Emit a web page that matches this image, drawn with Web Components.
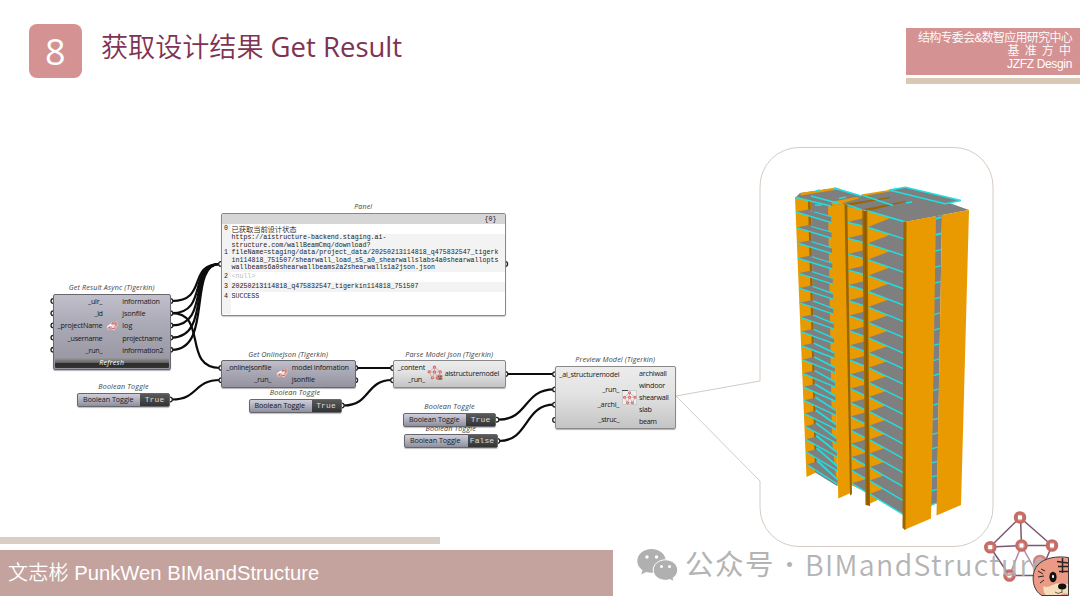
<!DOCTYPE html>
<html lang="zh-CN">
<head>
<meta charset="utf-8">
<title>Get Result</title>
<style>
    body { margin: 0; background: #fff; overflow: hidden; }
    .latin { font-weight: 400; font-size: 27.5px; }
</style>
</head>
<body>
<slide-page>
    <slide-header slot="header" number="8">
        <span>获取设计结果 <fit-text class="latin" w="131.5">Get Result</fit-text></span>
        <fit-text slot="org" w="154">结构专委会&amp;数智应用研究中心</fit-text>
        <fit-text slot="org" w="64.5">基 准 方 中</fit-text>
        <fit-text slot="org" w="65">JZFZ Desgin</fit-text>
    </slide-header>

    <node-canvas>
        <gh-panel x="221" y="212.5" w="284.5" h="103"></gh-panel>
        <gh-node x="53" y="294" w="117.5" h="75.5" name="Get Result Async (Tigerkin)" name-w="86" name-y="287"
            in-w="48.3" gap="20" row="12.2" button="Refresh" icon="small"
            inputs="_ulr_:14.3,_id:7.7,_projectName:44.7,_username:34.7,_run_:16.7"
            outputs="information:37.5,jsonfile:23,log:10,projectname:40,information2:41"></gh-node>
        <gh-toggle x="77" y="393" w="93" value="True" name-y="385.5"></gh-toggle>
        <gh-node x="221" y="360" w="134.5" h="28" name="Get OnlineJson (Tigerkin)" name-w="80" name-y="353.5"
            in-w="49.3" gap="20.5" row="12.2" icon="small"
            inputs="_onlinejsonfile:45,_run_:17" outputs="model infomation:57,jsonfile:23"></gh-node>
        <gh-toggle x="248.5" y="398.5" w="93" value="True" name-y="392.2"></gh-toggle>
        <gh-node x="393" y="360" w="112.5" h="28" name="Parse Model Json (Tigerkin)" name-w="88" name-y="353.5"
            in-w="31" gap="19.7" row="12.2" tone="light" icon="graph"
            inputs="_content:27.3,_run_:17" outputs="aistructuremodel:54.5"></gh-node>
        <gh-toggle x="404" y="434" w="93.5" value="False" name-y="427.7"></gh-toggle>
        <gh-toggle x="403" y="412.5" w="93" value="True" name-y="406"></gh-toggle>
        <gh-node x="555" y="365.5" w="120.5" h="63" name="Preview Model (Tigerkin)" name-w="80" name-y="358.5"
            in-w="63.3" gap="19.7" row="12.1" in-row="15.3" tone="light" icon="box"
            inputs="_ai_structuremodel:60,_run_:17,_archi_:21.7,_struc_:21"
            outputs="archiwall:27.7,windoor:26,shearwall:29.7,slab:12.7,beam:17.7"></gh-node>
        <tower-model></tower-model>
    </node-canvas>

    <slide-footer slot="footer">
        文志彬 <fit-text w="245">PunkWen BIMandStructure</fit-text>
        <wechat-mark slot="mark"></wechat-mark>
    </slide-footer>
</slide-page>

<script>
// y of the canvas area inside the slide
const CANVAS_TOP = 100;

// inline text spread to a given width
class FitText extends HTMLElement {
    constructor() {
        super();
        this.attachShadow({ mode: 'open' });
        this.shadowRoot.innerHTML = `
            <style>
                :host { display: inline-block; white-space: nowrap; }
            </style><slot></slot>`;
    }

    connectedCallback() {
        const w = parseFloat(this.getAttribute('w'));
        if (!w) return;
        const natural = this.getBoundingClientRect().width;
        const n = this.textContent.length;
        const ls = (w - natural) / n;
        this.style.letterSpacing = ls + 'px';
        this.style.width = w + 'px';
    }
}

class SlidePage extends HTMLElement {
    constructor() {
        super();
        this.attachShadow({ mode: 'open' });
        this.shadowRoot.innerHTML = `
            <style>
                :host {
                    display: grid;
                    grid-template-rows: ${CANVAS_TOP}px 430px 78px;
                    width: 1080px;
                    height: 608px;
                    background: #fff;
                    overflow: hidden;
                }
            </style>
            <slot name="header"></slot>
            <slot></slot>
            <slot name="footer"></slot>`;
    }
}

class SlideHeader extends HTMLElement {
    connectedCallback() {
        this.attachShadow({ mode: 'open' });
        this.shadowRoot.innerHTML = `
            <style>
                :host {
                    display: flex;
                    align-items: flex-start;
                    padding-left: 28.5px;
                    font-family: "Open Sans", "Noto Sans CJK SC", sans-serif;
                }
                .num {
                    width: 53.5px;
                    height: 53.5px;
                    margin-top: 24px;
                    border-radius: 8px;
                    background: #d59293;
                    color: #fff;
                    font: 400 36px/55px "Open Sans", sans-serif;
                    text-align: center;
                }
                .title {
                    margin: 27px 0 0 19px;
                    font-size: 27.1px;
                    line-height: 40px;
                    font-weight: 350;
                    color: #7f3352;
                    white-space: nowrap;
                }
                .right { margin-left: auto; width: 174px; margin-top: 28px; }
                .org {
                    display: flex;
                    flex-direction: column;
                    align-items: flex-end;
                    box-sizing: border-box;
                    height: 46.5px;
                    padding: 4px 8px 0 0;
                    background: #d59293;
                    color: #fff;
                    font: 350 12px/13.2px "Liberation Sans", "Noto Sans CJK SC", sans-serif;
                }
                .line { height: 6.5px; margin-top: 3px; background: #d8c8b4; }
            </style>
            <div class="num">${this.getAttribute('number')}</div>
            <div class="title"><slot></slot></div>
            <div class="right">
                <div class="org"><slot name="org"></slot></div>
                <div class="line"></div>
            </div>`;
    }
}

class NodeCanvas extends HTMLElement {
    constructor() {
        super();
        this.attachShadow({ mode: 'open' });
        const wire = (x1, y1, x2, y2) => {
            const d = Math.max((x2 - x1) * 0.55, 18);
            return `<path d="M${x1} ${y1}C${x1 + d} ${y1} ${x2 - d} ${y2} ${x2} ${y2}"/>`;
        };
        const outs = [301, 313.2, 325.4, 337.6, 349.8];
        const ports = [
            ...outs.map(y => [53.3, y]), ...outs.map(y => [170.5, y]),
            [221, 264], [505.3, 264], [170, 399.5], [221.3, 368], [221.3, 380.2],
            [355.3, 368], [355.3, 380.2], [341.8, 405.5], [393, 368], [393, 380.2],
            [505.5, 374], [496.5, 419.7], [497.5, 441],
            [555, 374.2], [555, 389.4], [555, 404.7], [555, 420]
        ];
        this.shadowRoot.innerHTML = `
            <style>
                :host { display: block; position: relative; }
                svg { position: absolute; inset: 0; overflow: visible; }
            </style>
            <svg width="1080" height="430" viewBox="0 ${CANVAS_TOP} 1080 430">
                <path d="M676 396 760 381V187a39 39 0 0 1 39-39.5H954a39 39 0 0 1 39 39.5V507a39 39 0 0 1-39 39.5H799a39 39 0 0 1-39-39.5V481Z"
                    fill="#fff" stroke="#d6cbc3"/>
                <g fill="none" stroke="#0c0c0c" stroke-width="2.2">
                    ${outs.map(y => `<path d="M172 ${y}C${208 + (y - 301) / 9} ${y} 187 264 220 264"/>`).join('')}
                    <path d="M172 313.2C208 313.2 182 368 220 368"/>
                    ${wire(172, 399.5, 220, 380)}
                    ${wire(357, 368, 392, 368)}
                    ${wire(344, 405.5, 392, 380)}
                    ${wire(507, 374, 554, 374)}
                    ${wire(498, 419.7, 554, 389.4)}
                    ${wire(499, 441, 554, 404.7)}
                </g>
                <g fill="#fff" stroke="#222" stroke-width="1.3">
                    ${ports.map(p => `<circle cx="${p[0]}" cy="${p[1]}" r="2.3"/>`).join('')}
                </g>
            </svg>
            <slot></slot>`;
    }
}

const nodeBox = el => {
    const n = a => parseFloat(el.getAttribute(a));
    el.style.left = n('x') + 'px';
    el.style.top = n('y') - CANVAS_TOP + 'px';
    el.style.width = n('w') + 'px';
    if (n('h')) el.style.height = n('h') + 'px';
};

const captionStyle = `
    .name {
        position: absolute;
        left: 0;
        right: 0;
        height: 10px;
        text-align: center;
        font-style: italic;
        color: #444;
        line-height: 10px;
    }`;

// component icons
const graph = `
    <g fill="none" stroke="#c98f98" stroke-width=".6"><path d="M7 2 2 6.5 5 12H10L12.5 6.5ZM2 6.5H12.500M7 2V6.500L5 12M7 6.500 10 12"/></g>
    <g fill="#fff" stroke="#d0706a" stroke-width="1.100"><circle cx="7" cy="2" r="1"/><circle cx="2" cy="6.500" r="1"/><circle cx="7" cy="6.500" r="1"/><circle cx="12.500" cy="6.500" r="1"/><circle cx="5" cy="12" r="1"/><circle cx="10" cy="12" r="1"/></g>`;
const icons = {
    small: `<svg width="14" height="14" viewBox="0 0 13 13"><path d="M1 8 3 5.500 5 5 6 2.500 9 3 11.500 1 12 6.500 9 11 5 9.500 3 11Z" fill="#e0adad"/><path d="M2 7.500 5 5 7 7 10 4M7 7 8 10" stroke="#fff" fill="none"/><path d="M6.500 3.500 9.500 5M10 3V6M6 8.500 9 9M4 7.500V9" stroke="#b2555c" fill="none" stroke-width=".8"/></svg>`,
    graph: `<svg width="16" height="16" viewBox="0 0 15 15">${graph}<path d="M9 14V10.500Q10 8.500 12 9L14.500 9.500V14Z" fill="#d97f74"/><path d="M10.500 11H11.500M13 10V11.500M11 13H13.500" stroke="#40251f" stroke-width=".7"/></svg>`,
    box: `<svg width="15" height="15" viewBox="0 0 15 15"><path d="M.5.500H14.500V14.500H.5Z" fill="#eee" stroke="#bbb" stroke-width=".6"/><path d="M0 .500H6" stroke="#444"/><g transform="translate(.5 .8)">${graph}</g></svg>`
};

class GhNode extends HTMLElement {
    connectedCallback() {
        this.attachShadow({ mode: 'open' });
        nodeBox(this);
        const a = k => this.getAttribute(k);
        const light = a('tone') === 'light';
        const list = s => s.split(',').map(t => {
            const [text, w] = t.split(':');
            return `<div><fit-text w="${w}">${text}</fit-text></div>`;
        }).join('');

        this.shadowRoot.innerHTML = `
            <style>
                :host {
                    display: flex;
                    flex-direction: column;
                    position: absolute;
                    box-sizing: border-box;
                    border: 1px solid ${light ? '#888' : '#66666e'};
                    border-radius: 2px;
                    background: ${light
                        ? 'linear-gradient(#ececec, #e2e2e2 45%, #c4c4c4)'
                        : 'linear-gradient(#c0bfca, #aaa9b6 40%, #94939f)'};
                    box-shadow: 0 1px 1px rgba(0, 0, 0, .3);
                    font: 500 7.2px/8px "Open Sans", sans-serif;
                    color: #16161a;
                }
                ${captionStyle}
                .body { display: flex; flex: 1; align-items: center; padding-bottom: 1.5px; }
                .in, .out { display: flex; flex-direction: column; }
                .in { width: ${a('in-w')}px; align-items: flex-end; }
                .in div { height: ${a('in-row') || a('row')}px; line-height: ${a('in-row') || a('row')}px; }
                .out div { height: ${a('row')}px; line-height: ${a('row')}px; }
                .icon { width: ${a('gap')}px; display: flex; justify-content: center; }
                .btn {
                    height: 10px;
                    margin: 0 1px 1px;
                    border-radius: 1px;
                    background: linear-gradient(#999, #666 45%, #2c2c2c 50%, #333);
                    color: #fff;
                    font: italic 500 7px/9px "Open Sans", sans-serif;
                    text-align: center;
                }
            </style>
            <div class="name" style="top:${a('name-y') - a('y') - 6}px"><fit-text w="${a('name-w')}">${a('name')}</fit-text></div>
            <div class="body">
                <div class="in">${list(a('inputs'))}</div>
                <div class="icon">${icons[a('icon')]}</div>
                <div class="out">${list(a('outputs'))}</div>
            </div>
            ${a('button') ? `<div class="btn"><fit-text w="25">${a('button')}</fit-text></div>` : ''}`;
    }
}

class GhToggle extends HTMLElement {
    connectedCallback() {
        this.attachShadow({ mode: 'open' });
        nodeBox(this);
        const value = this.getAttribute('value');
        const top = this.getAttribute('name-y') - this.getAttribute('y') - 6;
        this.shadowRoot.innerHTML = `
            <style>
                :host {
                    display: flex;
                    position: absolute;
                    box-sizing: border-box;
                    height: 14px;
                    border: 1px solid #66666e;
                    border-radius: 2px;
                    background: linear-gradient(#cfcfdc, #a9a9b8 60%, #8f8f9c);
                    box-shadow: 0 1px 1px rgba(0, 0, 0, .25);
                    font: 500 7.2px/11px "Open Sans", sans-serif;
                    color: #16161a;
                }
                ${captionStyle}
                .label { flex: 1; padding-left: 5px; }
                .value {
                    width: 29px;
                    background: linear-gradient(#5a5a5a, #333);
                    color: #ddd;
                    font: 8px/11px "Liberation Mono", monospace;
                    text-align: center;
                }
            </style>
            <div class="name" style="top:${top}px"><fit-text w="50.5">Boolean Toggle</fit-text></div>
            <div class="label"><fit-text w="50.5">Boolean Toggle</fit-text></div>
            <div class="value"><fit-text w="${value.length * 4.9}">${value}</fit-text></div>`;
    }
}

class GhPanel extends HTMLElement {
    connectedCallback() {
        this.attachShadow({ mode: 'open' });
        nodeBox(this);
        this.shadowRoot.innerHTML = `
            <style>
                :host {
                    display: block;
                    position: absolute;
                    box-sizing: border-box;
                    border: 1px solid #888;
                    border-radius: 2px;
                    background: #fff;
                    box-shadow: 0 1px 1px rgba(0, 0, 0, .2);
                    font: 6.62px/7.4px "Liberation Mono", "Noto Sans CJK SC", monospace;
                    color: #222;
                }
                ${captionStyle}
                .name { font: italic 500 7px/10px "Open Sans", sans-serif; }
                .head { height: 10px; background: #d6d6d6; text-align: right; line-height: 10px; padding-right: 8px; }
                .row { display: flex; align-items: center; height: 10px; background: linear-gradient(90deg, #f3f3f3 8.5px, transparent 8.5px); }
                .row.alt { background: #f3f3f3; }
                .row.url { height: 38px; }
                .row.last { height: 10px; padding-bottom: 12.500px; }
                .idx { width: 9.5px; padding-left: 2px; box-sizing: border-box; flex: none; }
                .null { color: #bbb; }
                .zh { font: 7.4px/9px "Noto Sans CJK SC", sans-serif; font-weight: 350; }
                .url .txt { display: flex; flex-direction: column; align-items: flex-start; padding-top: 1px; }
            </style>
            <div class="name" style="top:-12px"><fit-text w="18">Panel</fit-text></div>
            <div class="head">{0}</div>
            <div class="row"><span class="idx">0</span><fit-text class="zh" w="65">已获取当前设计状态</fit-text></div>
            <div class="row alt url"><span class="idx">1</span><div class="txt">
                <fit-text w="155">https://aistructure-backend.staging.ai-</fit-text>
                <fit-text w="139">structure.com/wallBeamCmq/download?</fit-text>
                <fit-text w="267">fileName=staging/data/project_data/20250213114818_q475832547_tigerk</fit-text>
                <fit-text w="267">in114818_751507/shearwall_load_s5_a0_shearwallslabs4a0shearwallopts</fit-text>
                <fit-text w="203.500">wallbeams6a0shearwallbeams2a2shearwalls1a2json.json</fit-text>
            </div></div>
            <div class="row"><span class="idx">2</span><span class="null">&lt;null&gt;</span></div>
            <div class="row alt"><span class="idx">3</span><fit-text w="187">20250213114818_q475832547_tigerkin114818_751507</fit-text></div>
            <div class="row last"><span class="idx">4</span><span>SUCCESS</span></div>`;
    }
}

// high-rise model: walls orange, slabs gray, beams cyan
class TowerModel extends HTMLElement {
    constructor() {
        super();
        this.attachShadow({ mode: 'open' });
        this.shadowRoot.innerHTML = `
            <style>
                :host { display: block; position: absolute; left: 780px; top: ${170 - CANVAS_TOP}px; }
                svg { display: block; }
            </style>
            <svg width="200" height="370" viewBox="780 170 200 370">${this.draw()}</svg>`;
    }

    draw() {
        const O = '#e89a00', G = '#7f7f7f', C = '#1fe0e0', D = '#9b6500';
        const poly = (pts, fill, extra = '') => `<polygon points="${pts}" fill="${fill}" ${extra}/>`;
        const line = (x1, y1, x2, y2, w = 1.4) =>
            `<path d="M${x1} ${y1}L${x2} ${y2}" stroke="${C}" stroke-width="${w}"/>`;
        const mix = (a, b, t) => a + (b - a) * t;
        let s = '';

        // left bay
        s += poly('795,197 832,204 838,486 817,472 806.500,477', O);
        s += poly('811,200 828,203 832,440 837,486 816,473', G);
        s += poly('808,200 810.500,200 816.500,470 815,473', D);
        for (let i = 0; i < 19; i++) {
            const t = i / 18;
            const yl = 212 + 15.7 * i - 0.093 * i * i;
            const yr = 222.7 + 15.6 * i - 0.06 * i * i;
            const xl = mix(795.8, 806.8, t), xr = mix(831.5, 837.5, t);
            const xm = mix(811, 817, t);
            s += poly(`${xl},${yl} ${xm},${yl - 3} ${xr},${yr - 6} ${xr},${yr}`, G);
            s += line(xm, yl - mix(1, 4, t), xr, yr - mix(6, 4.5, t), mix(1.1, 1.8, t));
            s += line(xl, yl, xr, yr);
        }
        // middle bay
        s += poly('846,204 864,206 866,492 851,485', O);
        for (let i = 0; i < 19; i++) {
            const t = i / 18;
            const yl = 222.3 + 16.1 * i - 0.089 * i * i;
            const yr = 226 + 16.35 * i - 0.088 * i * i;
            const xl = mix(846.7, 851.7, t), xr = mix(863, 865.5, t);
            s += poly(`${xl},${yl} ${xr},${yl - 4} ${xr},${yr}`, G);
            s += line(xl, yl, xr, yr);
        }
        // main bay
        const L = i => 210.7 + 16.6 * i - 0.089 * i * i;
        const R = i => 221.7 + 17.2 * i - 0.093 * i * i;
        s += poly('867,210 905,221 904,515 869,494', O);
        s += poly('869,494 880,499 869,504', O);
        for (let i = 1; i < 20; i++) {
            const t = i / 19, k = mix(0.66, 0.4, t), xl = mix(867.3, 869.5, t);
            s += poly(`${xl},${L(i)} 904,${R(i)} 904,${R(i - 1)} ${mix(xl, 904, k)},${mix(L(i - 1), R(i - 1), k)}`, G);
            s += line(xl, L(i - 1), 904, R(i - 1));
        }
        s += line(869.5, L(19), 904, R(19));
        // gap between the two end walls
        s += poly('935,216 942,215 937,503 931,506', G);
        for (let i = 0; i < 20; i++) {
            const y = 218 + 16.4 * i - 0.071 * i * i, x = mix(935.5, 931, i / 19);
            s += line(x, y + .7, x + 6, y - .9, i < 2 ? 2 : 1.3);
        }
        // roof
        s += poly('796,197 800,193 836,188 861,195.500 892,190.500 905,187.500 944,201 969,210 905,222 867,211 845,206 830,206', G);
        s += poly('800,193 836,187.500 840,189 801,195.500', O);
        s += poly('861,194.500 892,189.500 895,190.500 864,196', O);
        s += poly('831,202 856,197 860,198 833,206', O);
        s += poly('843,204 890,197 890,198 847,206', D);
        s += poly('864,209 905,201 905,202 868,211', D);
        s += poly('811,204 826,204 827,210 812,212', G);
        s += '<path d="M811 196 843 204.500M815 205H822M816 191 820 190M834 188 861 196M839 198.500 846 197M862 195 893 205.500M906 203 912 202" stroke="' + C + '" fill="none" stroke-width="1.700"/>';
        s += poly('889,190 905.500,187.200 961,200.500 945,203.800', G, `stroke="${C}" stroke-width="1.500"`);
        s += line(795.500, 197.500, 831, 206, 1.6);
        s += line(845, 204, 862, 210, 1.6) + line(867, 210.7, 905, 221.7, 1.6);
        // walls in front
        s += poly('831,206 845.500,203.500 850.500,493 838.300,498.500', O);
        s += poly('844.500,204 847.300,204.500 852,494 850,495.500', D);
        s += poly('862.300,210.500 867.300,211 870,506 865.500,505', D);
        s += '<path d="M865 211 868 505" stroke="#805200" stroke-width=".8"/>';
        s += poly('904,222 936,216 931,518.500 904,530', O);
        s += poly('903.500,221.500 906.500,222 905.500,530 902.500,528', D);
        s += poly('942,215 969,210 961,505 936.500,515.500', O);
        return s;
    }
}

class SlideFooter extends HTMLElement {
    constructor() {
        super();
        this.attachShadow({ mode: 'open' });
        this.shadowRoot.innerHTML = `
            <style>
                :host { display: flex; position: relative; }
                .left { width: 613px; padding-top: 7px; }
                .line { width: 439.5px; height: 6.5px; background: #d9cec6; }
                .bar {
                    box-sizing: border-box;
                    margin-top: 6.5px;
                    height: 46px;
                    padding-left: 8px;
                    background: #c4a29e;
                    color: #fff;
                    font: 20.2px/46px "Liberation Sans", "Noto Sans CJK SC", sans-serif;
                    font-weight: 350;
                    white-space: nowrap;
                }
            </style>
            <div class="left">
                <div class="line"></div>
                <div class="bar"><slot></slot></div>
            </div>
            <slot name="mark"></slot>`;
    }
}

class WechatMark extends HTMLElement {
    constructor() {
        super();
        this.attachShadow({ mode: 'open' });
        const dots = [[1020, 517.5], [990.3, 547.2], [1021.5, 545.5], [1052, 545.5], [1009.5, 575.5]];
        this.shadowRoot.innerHTML = `
            <style>
                :host {
                    display: flex;
                    align-items: center;
                    height: 69px;
                    padding-left: 24px;
                    font: 350 28.5px/40px "Noto Sans CJK SC", sans-serif;
                    color: #b0b0b0;
                    white-space: nowrap;
                }
                .chat { flex: none; margin-right: 7px; }
                .zh, .dot, .en { position: relative; z-index: 1; opacity: .95; flex: none; }
                .zh { font-weight: 400; margin-top: -3px; }
                .dot { width: 29px; text-align: center; margin: -3px 1px 0 0; font-size: 24px; }
                .en { margin-top: -2px; }
                .logo { position: absolute; left: 980px; top: -25px; }
                .tiger { position: absolute; left: 1030px; top: 24px; z-index: 2; }
            </style>
            <svg class="chat" width="41" height="34" viewBox="637 547 41 34">
                <path d="M651.5 548c-8 0-14.200 5.300-14.200 12 0 3.700 2 7 5.200 9.200l-1.300 4.300 5-2.500q2.500.8 5.300.8c8 0 14.200-5.300 14.200-12s-6.200-11.800-14.200-11.800Z" fill="#b0b0b0"/>
                <path d="M665.500 558.800c-6.800 0-12.300 4.500-12.300 10.200s5.500 10.300 12.300 10.300q2.300 0 4.400-.7l4.300 2-1.100-3.600c2.800-1.900 4.600-4.700 4.600-8 0-5.700-5.500-10.200-12.200-10.200Z" fill="#b0b0b0" stroke="#fff" stroke-width="1"/>
                <g fill="#fff"><circle cx="647" cy="556" r="1.700"/><circle cx="656.500" cy="556" r="1.700"/><circle cx="661.500" cy="565.500" r="1.500"/><circle cx="669.500" cy="565.500" r="1.500"/></g>
            </svg>
            <fit-text class="zh" w="90">公众号</fit-text>
            <span class="dot">·</span>
            <fit-text class="en" w="243.5">BIMandStructure</fit-text>
            <svg class="logo" width="90" height="95" viewBox="980 505 90 95">
                <path d="M990 547 1020 517.500 1052 545.500M1020.500 517.500 1021.500 545.500M990 547 1021.500 545.500H1052L1045 562M990 547 1009.500 575.500H1035" fill="none" stroke="#7d5570" stroke-width="1.500"/>
                <path d="M1021.500 545.500 1009.500 575.500M1021.500 545.500 1035 570" fill="none" stroke="#b088a8" stroke-width="1.500"/>
                ${dots.map(d => `<circle cx="${d[0]}" cy="${d[1]}" r="4.700" fill="#fff" stroke="#c56c64" stroke-width="3.200"/>
                <rect x="${d[0] - 2.600}" y="${d[1] - 2.600}" width="5.200" height="5.200" fill="#fff" stroke="#c56c64" stroke-width="1"/>`).join('')}
                <circle cx="1040" cy="562" r="6" fill="#e0a39d" stroke="#c98882" stroke-width="2.500"/>
            </svg>
            <svg class="tiger" width="40" height="44" viewBox="1030 554 40 44">
                <path d="M1068.500 557.500C1058 556 1044 557 1037 566C1031 573 1031.500 590 1042 595.500H1068.500Z" fill="#eb9a86"/>
                <path d="M1043.500 586C1048 589 1053 584 1057 583.500L1068.500 584V595.500H1046Q1042.500 591 1043.500 586Z" fill="#f3dfb9"/>
                <path d="M1068.500 557.500C1058 556 1044 557 1037 566C1031 573 1031.500 590 1042 595.500H1068.500Z" fill="none" stroke="#40373a" stroke-width="1"/>
                <path d="M1057 561.500 1068 563M1058 566.500H1068M1059 571.500H1068M1062.500 558V573" stroke="#2a2225" stroke-width="1.500"/>
                <path d="M1038 571 1043 574M1038 577 1044 576M1040 583 1044 580M1041 569 1045 571" stroke="#2a2225" stroke-width="1"/>
                <ellipse cx="1053" cy="577" rx="3.600" ry="5.200" fill="#111"/>
                <ellipse cx="1053" cy="576.500" rx="1" ry="1.800" fill="#fff"/>
                <ellipse cx="1062.200" cy="586.500" rx="4.200" ry="2.900" fill="#111"/>
                <path d="M1062 589V593M1055 592Q1058 595 1062 592" fill="none" stroke="#4a3a36" stroke-width=".8"/>
                <path d="M1060 595Q1064 592 1068 594V595Z" fill="#eb9a86"/>
            </svg>`;
    }
}

customElements.define('fit-text', FitText);
customElements.define('slide-page', SlidePage);
customElements.define('slide-header', SlideHeader);
customElements.define('node-canvas', NodeCanvas);
customElements.define('gh-panel', GhPanel);
customElements.define('gh-node', GhNode);
customElements.define('gh-toggle', GhToggle);
customElements.define('tower-model', TowerModel);
customElements.define('slide-footer', SlideFooter);
customElements.define('wechat-mark', WechatMark);

// widths measured before the hosts were styled are taken again
document.querySelectorAll('fit-text').forEach(el => {
    el.style.letterSpacing = el.style.width = '';
    el.connectedCallback();
});
</script>
</body>
</html>
